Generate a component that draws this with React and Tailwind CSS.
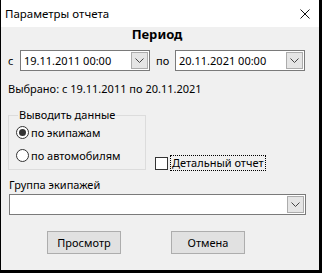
import React from "react";

function Chevron() {
  return (
    <svg width="9" height="5" viewBox="0 0 9 5" className="block">
      <path d="M0.5 0.5 L4.5 4.5 L8.5 0.5" fill="none" stroke="#444" strokeWidth="1" />
    </svg>
  );
}

function DropBtn() {
  return (
    <div className="w-[17px] h-[17px] bg-[#e5e5e5] border border-[#acacac] flex items-center justify-center">
      <Chevron />
    </div>
  );
}

function DateCombo({ value }) {
  return (
    <div className="w-[130px] h-[21px] bg-white border border-[#7a7a7a] flex items-center pl-[3px] pr-[1px]">
      <span className="flex-1 leading-none">{value}</span>
      <DropBtn />
    </div>
  );
}

function Radio({ checked, label }) {
  return (
    <div className="flex items-center h-[16px]">
      <div className="w-[13px] h-[13px] rounded-full border border-[#333] bg-white flex items-center justify-center">
        {checked && <div className="w-[7px] h-[7px] rounded-full bg-[#333]" />}
      </div>
      <span className="ml-[2px] leading-none">{label}</span>
    </div>
  );
}

function Button({ children }) {
  return (
    <div className="w-[74px] h-[23px] bg-[#e1e1e1] border border-[#adadad] flex items-center justify-center leading-none">
      {children}
    </div>
  );
}

export default function App() {
  return (
    <div
      className="w-[322px] h-[273px] bg-black pl-[1px] pr-[3px] pb-[3px] flex flex-col text-[11px] text-black"
      style={{ fontFamily: '"Noto Sans", "Open Sans", sans-serif' }}
    >
      <div className="h-[27px] bg-white flex items-center justify-between pl-[4px] pr-[9px] shrink-0">
        <span className="leading-none text-[11.5px]">Параметры отчета</span>
        <svg width="10" height="10" viewBox="0 0 10 10">
          <path d="M0.5 0.5 L9.5 9.5 M9.5 0.5 L0.5 9.5" stroke="#111" strokeWidth="1" />
        </svg>
      </div>
      <div className="flex-1 bg-[#f0f0f0] flex flex-col pl-[7px] pr-[13px]">
        <div className="h-[16px] text-center font-bold text-[13px] leading-[16px] mt-[-1px]">Период</div>
        <div className="flex items-center mt-[8px] h-[21px]">
          <span className="w-[12px] leading-none">с</span>
          <DateCombo value="19.11.2011 00:00" />
          <span className="w-[25px] pl-[6px] leading-none">по</span>
          <DateCombo value="20.11.2021 00:00" />
        </div>
        <div className="mt-[10px] h-[16px] leading-[16px]">Выбрано: с 19.11.2011 по 20.11.2021</div>
        <div className="flex items-end mt-[18px]">
          <div className="relative w-[138px] h-[55px] border border-[#dcdcdc] flex flex-col pl-[7px] pt-[8px]">
            <span className="absolute left-[9px] top-[-9px] bg-[#f0f0f0] px-[1px] leading-[16px]">Выводить данные</span>
            <Radio checked label="по экипажам" />
            <div className="h-[7px]" />
            <Radio label="по автомобилям" />
          </div>
          <div className="flex items-center ml-[9px] mb-[-1px] h-[16px]">
            <div className="w-[13px] h-[13px] border border-[#333] bg-white" />
            <span className="ml-[2px] border border-dotted border-black px-[1px] leading-[14px]">Детальный отчет</span>
          </div>
        </div>
        <div className="mt-[7px] h-[16px] leading-[16px] pl-[1px]">Группа экипажей</div>
        <div className="mt-[1px] ml-[1px] w-[297px] h-[21px] bg-white border border-[#7a7a7a] flex items-center justify-end pr-[1px]">
          <DropBtn />
        </div>
        <div className="flex mt-[16px] pl-[39px] gap-[50px]">
          <Button>Просмотр</Button>
          <Button>Отмена</Button>
        </div>
      </div>
    </div>
  );
}
